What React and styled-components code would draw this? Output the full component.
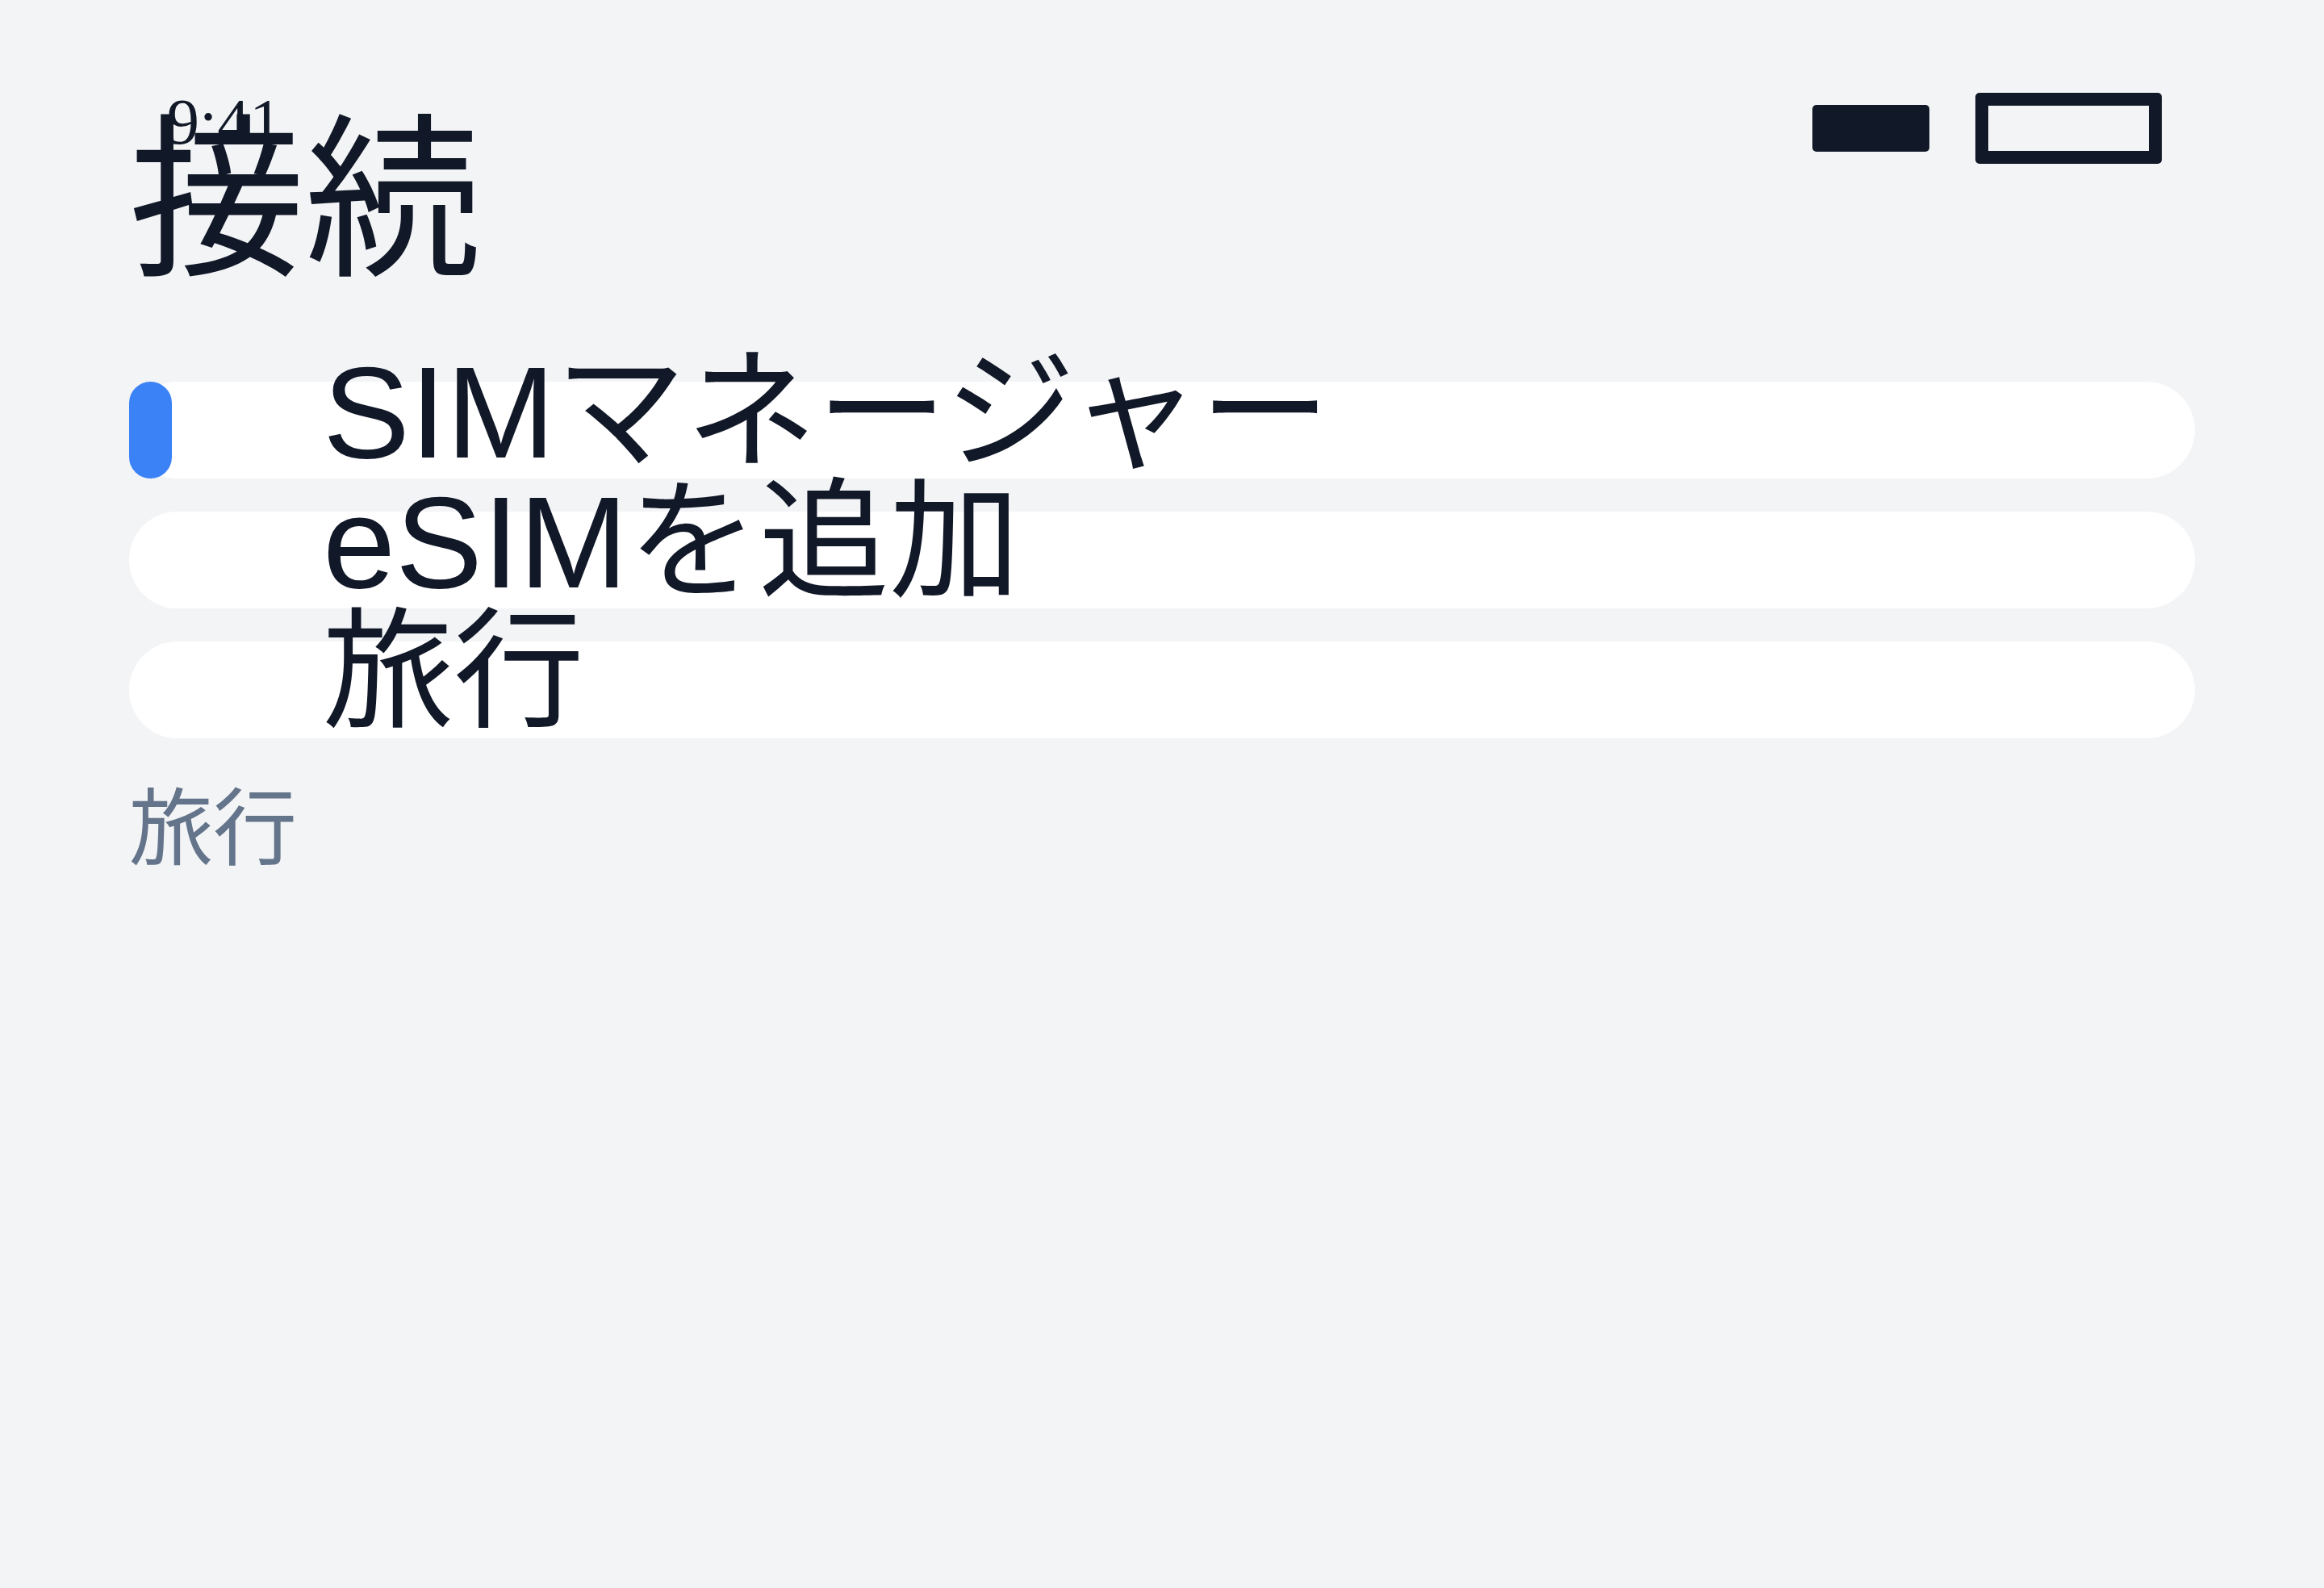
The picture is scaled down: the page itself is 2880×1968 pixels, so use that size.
import styled, { createGlobalStyle } from "styled-components";

const GlobalStyle = createGlobalStyle`
	html, body {
		margin: 0;
		padding: 0;
		background: #f3f4f6;
	}
`;

const Screen = styled.div`
	position: relative;
	min-height: 1968px;
	box-sizing: border-box;
	padding: 141px 160px 0;
	background: #f3f4f6;
	color: #111827;
	font-family: "Liberation Sans", "Noto Sans CJK JP", sans-serif;
`;

const StatusBar = styled.div`
	position: absolute;
	top: 106px;
	left: 207px;
	right: 201px;
	height: 106px;
	display: flex;
	justify-content: space-between;
	align-items: center;
`;

const Time = styled.span`
	align-self: flex-start;
	font-family: "Liberation Serif", serif;
	font-size: 80px;
	line-height: normal;
	color: #111827;
`;

const Indicators = styled.div`
	display: flex;
	align-items: center;
	gap: 57px;
`;

const Signal = styled.div`
	width: 145px;
	height: 58px;
	border-radius: 5px;
	background: #111827;
`;

const Battery = styled.div`
	width: 231px;
	height: 88px;
	box-sizing: border-box;
	border: 16px solid #111827;
	border-radius: 5px;
`;

const Title = styled.h1`
	margin: 0;
	font-size: 218px;
	font-weight: 400;
	line-height: 218px;
`;

const List = styled.div`
	display: flex;
	flex-direction: column;
	gap: 41px;
	margin-top: 114px;
`;

const Row = styled.div`
	position: relative;
	height: 120px;
	display: flex;
	align-items: flex-start;
	padding-left: 240px;
	background: #ffffff;
	border-radius: 60px;
`;

const ActiveMark = styled.span`
	position: absolute;
	left: 0;
	top: 0;
	width: 53px;
	height: 120px;
	border-radius: 27px;
	background: #3b82f6;
`;

const Label = styled.span`
	font-size: 162px;
	line-height: 75px;
	white-space: nowrap;
	color: #111827;
`;

const Section = styled.div`
	margin-top: 61px;
	font-size: 104px;
	line-height: 104px;
	color: #64748b;
`;

const items = [
	{ label: "SIMマネージャー", active: true },
	{ label: "eSIMを追加" },
	{ label: "旅行" },
];

const App = () => {
	return (
		<>
			<GlobalStyle />
			<Screen>
				<StatusBar>
					<Time>9:41</Time>
					<Indicators>
						<Signal />
						<Battery />
					</Indicators>
				</StatusBar>
				<Title>接続</Title>
				<List>
					{items.map((item) => (
						<Row key={item.label}>
							{item.active && <ActiveMark />}
							<Label>{item.label}</Label>
						</Row>
					))}
				</List>
				<Section>旅行</Section>
			</Screen>
		</>
	);
};

export default App;
